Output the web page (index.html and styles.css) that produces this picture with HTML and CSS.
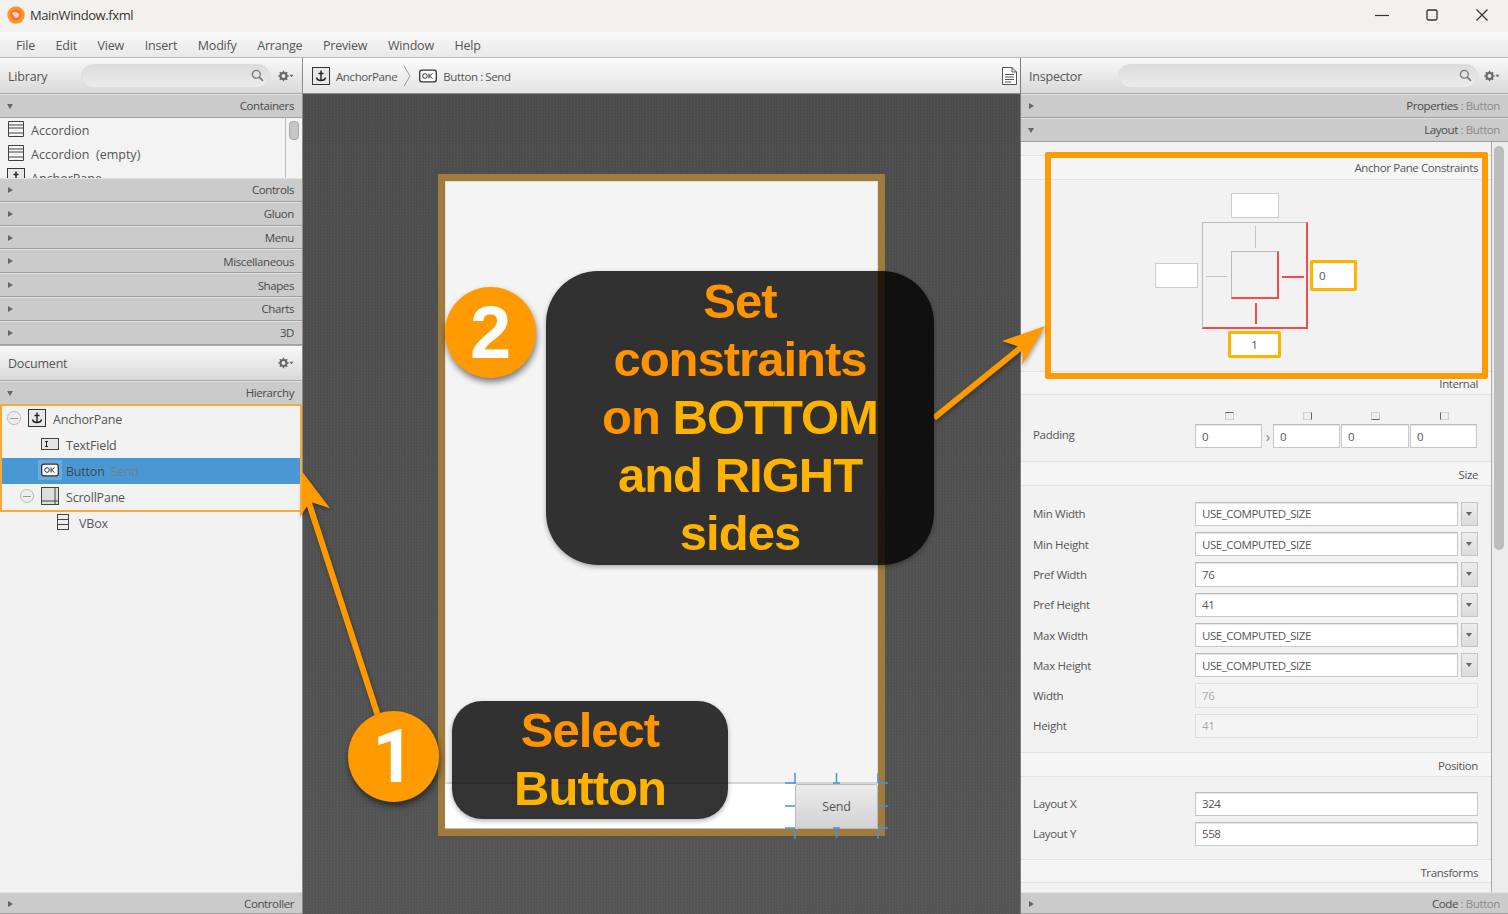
FILE: index.html
```html
<!DOCTYPE html>
<html lang="en">

<head>
    <meta charset="UTF-8">
    <title>MainWindow.fxml</title>
    <link rel="stylesheet" href="styles.css">
</head>

<body>
    <svg class="sprite" xmlns="http://www.w3.org/2000/svg">
        <symbol id="i-accordion" viewBox="0 0 18 18"><path d="M1.5 1.5h15v15h-15zM1.5 5h15M1.5 8h15M1.5 13h15" fill="none" stroke="#444" /></symbol>
        <symbol id="i-anchor" viewBox="0 0 18 18"><rect x=".5" y=".5" width="17" height="17" fill="#e8e8e8" stroke="#333" /><path d="M9 3.5v10M6.5 6.5h5M4.5 10.5c.5 2.5 2.5 3 4.5 3s4-.5 4.5-3" fill="none" stroke="#222" stroke-width="1.4" /></symbol>
        <symbol id="i-text" viewBox="0 0 18 14"><rect x=".5" y="1.5" width="17" height="11" fill="#e4e4e4" stroke="#444" /><path d="M4 4.5h3M4 9.5h3M5.5 4.5v5" fill="none" stroke="#222" /></symbol>
        <symbol id="i-ok" viewBox="0 0 18 14"><rect x=".7" y="1.2" width="16.6" height="11.6" rx="2" fill="#fff" stroke="#333" stroke-width="1.3" /><circle cx="6" cy="7" r="2.3" fill="none" stroke="#333" /><path d="M10 4.5v5M13.5 4.5l-3 2.5 3 2.5" fill="none" stroke="#333" /></symbol>
        <symbol id="i-scroll" viewBox="0 0 18 18"><rect x=".5" y=".5" width="17" height="17" fill="#ddd" stroke="#444" /><path d="M14 .5v17M.5 14h17" fill="none" stroke="#444" /></symbol>
        <symbol id="i-vbox" viewBox="0 0 12 16"><rect x=".5" y=".5" width="11" height="15" fill="#eee" stroke="#444" /><path d="M.5 5.5h11M.5 10.5h11" fill="none" stroke="#444" /></symbol>
        <symbol id="i-search" viewBox="0 0 14 14"><circle cx="5.7" cy="5.7" r="4.2" fill="none" stroke="#777" stroke-width="1.4" /><path d="M8.8 8.8l4 4" stroke="#777" stroke-width="1.8" /></symbol>
        <symbol id="i-gear" viewBox="0 0 16 12"><circle cx="5.5" cy="6" r="3" fill="none" stroke="#666" stroke-width="2" /><path d="M5.5 .8v2M5.5 9.2v2M.3 6h2M8.7 6h2M1.8 2.3l1.4 1.4M7.8 8.3l1.4 1.4M1.8 9.7l1.4-1.4M7.8 3.7l1.4-1.4" stroke="#666" stroke-width="1.4" /><path d="M11.5 4.8h4l-2 2.4z" fill="#666" /></symbol>
    </svg>

    <div class="titlebar">
        <svg class="app-logo" width="18" height="18" viewBox="0 0 17 17">
            <circle cx="8.5" cy="8.5" r="8.2" fill="#f99a1c" />
            <circle cx="8.5" cy="8.5" r="5.4" fill="#f6703a" />
            <path d="M4.500 6.500c2-1.500 4.500-1 6 0 1 .7 1.500 2 .5 3.500-1 1.300-3 1.500-4 .5-.5-1.500-1.800-2.500-2.500-4z" fill="#fbd0b8" />
        </svg>
        <span class="app-title">MainWindow.fxml</span>
        <div class="win-controls">
            <svg width="14" height="14" viewBox="0 0 14 14"><path d="M0 7.500h14" stroke="#333" stroke-width="1.2" /></svg>
            <svg width="14" height="14" viewBox="0 0 14 14"><rect x="2" y="2" width="10" height="10" rx="1.500" fill="none" stroke="#333" stroke-width="1.300" /></svg>
            <svg width="14" height="14" viewBox="0 0 14 14"><path d="M1.500 1.500l11 11M12.500 1.500l-11 11" stroke="#333" stroke-width="1.200" /></svg>
        </div>
    </div>

    <div class="menubar">
        <span>File</span><span>Edit</span><span>View</span><span>Insert</span><span>Modify</span><span>Arrange</span><span>Preview</span><span>Window</span><span>Help</span>
    </div>

    <div class="main">
        <div class="left">
            <div class="panel-head">
                <span class="panel-title">Library</span>
                <div class="search search-lib"><svg width="13" height="13"><use href="#i-search" /></svg></div>
                <svg class="gear" width="16" height="12"><use href="#i-gear" /></svg>
            </div>
            <div class="bar"><span class="tri down"></span>Containers</div>
            <div class="lib-list">
                <div class="lib-items">
                    <div class="lib-row"><svg width="18" height="18"><use href="#i-accordion" /></svg>Accordion</div>
                    <div class="lib-row"><svg width="18" height="18"><use href="#i-accordion" /></svg>Accordion&nbsp;&nbsp;(empty)</div>
                    <div class="lib-row"><svg width="18" height="18"><use href="#i-anchor" /></svg>AnchorPane</div>
                </div>
                <div class="lib-scroll"><div class="thumb"></div></div>
            </div>
            <div class="bar"><span class="tri"></span>Controls</div>
            <div class="bar"><span class="tri"></span>Gluon</div>
            <div class="bar"><span class="tri"></span>Menu</div>
            <div class="bar"><span class="tri"></span>Miscellaneous</div>
            <div class="bar"><span class="tri"></span>Shapes</div>
            <div class="bar"><span class="tri"></span>Charts</div>
            <div class="bar"><span class="tri"></span>3D</div>
            <div class="panel-head doc-head">
                <span class="panel-title">Document</span>
                <svg class="gear" width="16" height="12"><use href="#i-gear" /></svg>
            </div>
            <div class="bar"><span class="tri down"></span>Hierarchy</div>
            <div class="tree">
                <div class="tree-marked">
                    <div class="tree-row">
                        <span class="minus"></span>
                        <svg class="ic-root" width="18" height="18"><use href="#i-anchor" /></svg>AnchorPane
                    </div>
                    <div class="tree-row lvl1">
                        <svg width="18" height="14"><use href="#i-text" /></svg>TextField
                    </div>
                    <div class="tree-row lvl1 selected">
                        <svg width="18" height="14"><use href="#i-ok" /></svg>Button <em>Send</em>
                    </div>
                    <div class="tree-row lvl1b">
                        <span class="minus"></span>
                        <svg width="18" height="18"><use href="#i-scroll" /></svg>ScrollPane
                    </div>
                </div>
                <div class="tree-row lvl2">
                    <svg width="12" height="16"><use href="#i-vbox" /></svg>VBox
                </div>
            </div>
            <div class="bar foot"><span class="tri"></span>Controller</div>
        </div>

        <div class="center">
            <div class="crumbs">
                <svg width="18" height="18"><use href="#i-anchor" /></svg>
                <span>AnchorPane</span>
                <svg class="chev" width="8" height="22" viewBox="0 0 8 22"><path d="M1 1l6 10-6 10" fill="none" stroke="#999" /></svg>
                <svg width="18" height="14"><use href="#i-ok" /></svg>
                <span>Button : Send</span>
                <svg class="doc-ic" width="15" height="18" viewBox="0 0 15 18"><path d="M.5.500h9.500l4.500 4.500v12.500h-14zM10 .5v4.500h4.500M3 7.500h9M3 10h9M3 12.500h9M3 15h6" fill="#fff" stroke="#555" /></svg>
            </div>
            <div class="canvas">
                <div class="scene">
                    <div class="scene-body"></div>
                    <div class="scene-bottom">
                        <div class="scene-field"></div>
                        <div class="scene-btn">Send</div>
                    </div>
                </div>
            </div>
        </div>

        <div class="right">
            <div class="panel-head">
                <span class="panel-title">Inspector</span>
                <div class="search search-insp"><svg width="13" height="13"><use href="#i-search" /></svg></div>
                <svg class="gear" width="16" height="12"><use href="#i-gear" /></svg>
            </div>
            <div class="bar"><span class="tri"></span>Properties<i>&nbsp;: Button</i></div>
            <div class="bar"><span class="tri down"></span>Layout<i>&nbsp;: Button</i></div>
            <div class="insp">
                <div class="insp-body">
                    <div class="insp-gap"></div>
                    <div class="sec-head sec-anchor">Anchor Pane Constraints</div>
                    <div class="anchor-box">
                        <div class="a-input a-top"></div>
                        <div class="a-input a-left"></div>
                        <div class="a-input a-right">0</div>
                        <div class="a-input a-bottom">1</div>
                        <div class="a-outer"></div>
                        <div class="a-inner"></div>
                        <div class="tick tick-t"></div>
                        <div class="tick tick-l"></div>
                        <div class="tick tick-r"></div>
                        <div class="tick tick-b"></div>
                    </div>
                    <div class="sec-head">Internal</div>
                    <div class="pad-sec">
                        <span class="lbl">Padding</span>
                        <div class="pad-grid">
                            <span class="side s-top"></span><span></span><span class="side s-right"></span><span class="side s-bottom"></span><span class="side s-left"></span>
                            <div class="field">0</div><span class="pad-chev">›</span><div class="field">0</div><div class="field">0</div><div class="field">0</div>
                        </div>
                    </div>
                    <div class="sec-head">Size</div>
                    <div class="form form-size">
                        <span class="lbl">Min Width</span><div class="combo"><div class="field">USE_COMPUTED_SIZE</div><div class="combo-btn"></div></div>
                        <span class="lbl">Min Height</span><div class="combo"><div class="field">USE_COMPUTED_SIZE</div><div class="combo-btn"></div></div>
                        <span class="lbl">Pref Width</span><div class="combo"><div class="field">76</div><div class="combo-btn"></div></div>
                        <span class="lbl">Pref Height</span><div class="combo"><div class="field">41</div><div class="combo-btn"></div></div>
                        <span class="lbl">Max Width</span><div class="combo"><div class="field">USE_COMPUTED_SIZE</div><div class="combo-btn"></div></div>
                        <span class="lbl">Max Height</span><div class="combo"><div class="field">USE_COMPUTED_SIZE</div><div class="combo-btn"></div></div>
                        <span class="lbl">Width</span><div class="field off">76</div>
                        <span class="lbl">Height</span><div class="field off">41</div>
                    </div>
                    <div class="sec-head">Position</div>
                    <div class="form form-pos">
                        <span class="lbl">Layout X</span><div class="field">324</div>
                        <span class="lbl">Layout Y</span><div class="field">558</div>
                    </div>
                    <div class="sec-head">Transforms</div>
                </div>
                <div class="insp-scroll"><div class="thumb"></div></div>
            </div>
            <div class="bar foot"><span class="tri"></span>Code<i>&nbsp;: Button</i></div>
        </div>
    </div>

    <!-- tutorial marks on top of the app -->
    <div class="mark-box"></div>
    <svg class="overlay" width="1508" height="914" viewBox="0 0 1508 914">
        <path class="handles" d="M795 773v11M785 783h10M836.500 773v10M833 783h7M878 773v10M878 783h10M785 806h10M878 806h10M785 828h10M795 828v11M833 828h7M836.500 828v10M878 828v11M878 828h10" />
        <g class="arrows">
            <path d="M378 716L307 497" stroke="#ff9a00" stroke-width="6" />
            <path d="M302.300 471.700L330 508.300 310 501.700 300 516.700z" />
            <path d="M934 418l90-73" stroke="#ff9a00" stroke-width="6" />
            <path d="M1045 326l-43 15 21 7-1 17z" />
        </g>
    </svg>
    <div class="step step-2">2</div>
    <div class="step step-1">1</div>
    <div class="callout call-2">
        <span>Set</span><br><span>constraints</span><br><span>on</span> <b>BOTTOM</b><br><b>and RIGHT</b><br><b>sides</b>
    </div>
    <div class="callout call-1">
        <span>Select</span><br><b>Button</b>
    </div>
</body>

</html>
```

FILE: styles.css
```css
* {
    box-sizing: border-box;
}
html,
body {
    width: 1508px;
    height: 914px;
    margin: 0;
    padding: 0;
    overflow: hidden;
    position: relative;
    font-family: "Open Sans", "Noto Sans", sans-serif;
    font-size: 12px;
    letter-spacing: -0.2px;
    color: #555;
    background: #f2f2f2;
}
.sprite {
    display: none;
}

/* window chrome */
.titlebar {
    height: 32px;
    display: flex;
    align-items: center;
    padding-left: 7px;
    padding-bottom: 2px;
    background: #f3f1f0;
}
.app-logo {
    margin-right: 5px;
}
.app-title {
    font-size: 13px;
    letter-spacing: -0.4px;
    color: #333;
}
.win-controls {
    margin-left: auto;
    display: flex;
    gap: 36px;
    padding-right: 19px;
}
.menubar {
    height: 26px;
    display: flex;
    align-items: center;
    gap: 20.600px;
    padding: 2px 0 0 16px;
    background: linear-gradient(#f8f8f8, #e9e9e9);
    border-bottom: 1px solid #b8b8b8;
    font-size: 12.500px;
}
.main {
    display: flex;
    height: 856px;
}

/* panels */
.left {
    width: 303px;
    display: flex;
    flex-direction: column;
    border-right: 1px solid #8c8c8c;
}
.center {
    width: 717px;
    display: flex;
    flex-direction: column;
}
.right {
    width: 488px;
    display: flex;
    flex-direction: column;
    border-left: 1px solid #7c7c7c;
}
.panel-head {
    height: 36px;
    flex: none;
    display: flex;
    align-items: center;
    padding: 0 8px;
    background: linear-gradient(#f9f9f9, #d9d9d9);
    border-bottom: 1px solid #a8a8a8;
}
.panel-title {
    font-size: 12.500px;
    color: #555;
    padding-top: 2px;
}
.doc-head {
    justify-content: space-between;
    border-top: 1px solid #aaa;
}
.gear {
    flex: none;
}
.search {
    height: 24px;
    border: 1px solid #ddd;
    border-radius: 12px;
    background: linear-gradient(#dcdcdc, #ececec);
    display: flex;
    align-items: center;
    justify-content: flex-end;
    padding-right: 5px;
}
.search-lib {
    width: 189px;
    margin: 0 8px 0 auto;
}
.search-insp {
    width: 360px;
    margin: 0 6px 0 auto;
}
.bar {
    height: 23.850px;
    flex: none;
    display: flex;
    align-items: center;
    justify-content: flex-end;
    position: relative;
    padding: 0 8px 0 0;
    background: #cbcbcb;
    border-top: 1px solid #e2e2e2;
    border-bottom: 1px solid #a0a0a0;
    font-size: 11.500px;
    letter-spacing: -0.4px;
    color: #4a4a4a;
}
.bar i {
    font-style: normal;
    color: #8a8a8a;
}
.tri {
    position: absolute;
    left: 8px;
    top: 8px;
    border-left: 5px solid #666;
    border-top: 3px solid transparent;
    border-bottom: 3px solid transparent;
}
.tri.down {
    left: 7px;
    top: 9px;
    border-top: 5px solid #666;
    border-bottom: 0;
    border-left: 3px solid transparent;
    border-right: 3px solid transparent;
}
.foot {
    margin-top: auto;
    height: 22px;
}

/* library */
.lib-list {
    height: 60px;
    flex: none;
    display: flex;
    overflow: hidden;
    background: #f3f3f3;
}
.lib-items {
    flex: 1;
    border-right: 1px solid #bbb;
}
.lib-row {
    height: 24px;
    display: flex;
    align-items: center;
    gap: 6px;
    padding: 2px 0 0 7px;
    font-size: 12.500px;
    letter-spacing: 0;
}
.lib-row svg {
    margin-top: -3px;
}
.lib-scroll {
    width: 16px;
    flex: none;
    padding: 3px 3px 0 3px;
}
.lib-scroll .thumb {
    height: 19px;
    border-radius: 4px;
    background: #c6c6c6;
    border: 1px solid #aaa;
}

/* hierarchy */
.tree {
    background: #f2f2f2;
    padding-top: 1px;
}
.tree-marked {
    box-shadow: inset 2px 0 #f9a83a, inset -2px 0 #f9a83a, 0 -2px #f9a83a, 0 2px #f9a83a;
    position: relative;
    z-index: 1;
}
.tree-row {
    height: 26px;
    display: flex;
    align-items: center;
    padding-top: 1px;
    font-size: 12.500px;
}
.tree-row svg {
    margin: -2px 7px 0 0;
    flex: none;
}
.tree-row em {
    font-style: normal;
    color: #708090;
    margin-left: 6px;
}
.tree-row .ic-root {
    margin-left: 7px;
}
.minus {
    width: 14px;
    height: 14px;
    margin: -2px 0 0 7px;
    border-radius: 50%;
    border: 1px solid #bbb;
    background: linear-gradient(#9a9a9a, #9a9a9a) center / 8px 1px no-repeat, #eee;
    flex: none;
}
.lvl1 {
    padding-left: 41px;
}
.lvl1.selected {
    background: #4a98d3;
    margin: 0 2px;
    padding-left: 39px;
    color: #3d4a55;
}
.selected svg {
    background: #6aaade;
    outline: 3px solid #6aaade;
}
.lvl1b {
    padding-left: 20px;
}
.lvl1b .minus {
    margin: -2px 7px 0 0;
}
.lvl2 {
    padding-left: 57px;
}
.lvl2 svg {
    margin-right: 10px;
}

/* center: breadcrumb and canvas */
.crumbs {
    height: 36px;
    flex: none;
    display: flex;
    align-items: center;
    gap: 6px;
    padding: 0 3px 0 9px;
    background: linear-gradient(#fbfbfb, #e4e4e4);
    border-bottom: 1px solid #8c8c8c;
    font-size: 11.500px;
    letter-spacing: -0.400px;
}
.crumbs span {
    padding-top: 1px;
}
.chev {
    margin: 0 2px 0 0;
}
.doc-ic {
    margin-left: auto;
}
.canvas {
    flex: 1;
    display: flex;
    align-items: center;
    justify-content: center;
    padding-top: 2px;
    background-color: #4f4f4f;
    background-image:
        linear-gradient(rgba(0, 0, 0, 0.04), rgba(255, 255, 255, 0.03)),
        repeating-conic-gradient(#535353 0% 25%, #4d4d4d 0% 50%);
    background-size: 100% 100%, 3px 3px;
}
.scene {
    width: 447px;
    height: 662px;
    display: flex;
    flex-direction: column;
    background: #f4f4f4;
    border: 7px solid #9f7c3c;
}
.scene-body {
    flex: 1;
    border: 1px solid #ddd;
    border-bottom: 0;
}
.scene-bottom {
    height: 47px;
    display: flex;
    border-top: 2px solid #d6d6d6;
}
.scene-field {
    flex: 1;
    background: #fff;
    border-bottom: 1px solid #bbb;
}
.scene-btn {
    width: 83px;
    display: flex;
    align-items: center;
    justify-content: center;
    background: linear-gradient(#ececec, #d2d2d2);
    border: 1px solid #b8b8b8;
    border-radius: 3px;
    color: #555;
    font-size: 12.500px;
}

/* inspector */
.insp {
    flex: 1;
    display: flex;
    min-height: 0;
}
.insp-body {
    width: 471px;
    flex: none;
    border-right: 1px solid #a8a8a8;
    background: #f2f2f2;
    overflow: hidden;
}
.insp-gap {
    height: 13px;
}
.insp-scroll {
    flex: 1;
    padding: 4px 2px 0 2px;
    background: #ececec;
}
.insp-scroll .thumb {
    width: 10px;
    height: 404px;
    border-radius: 5px;
    background: #bdbdbd;
}
.sec-head {
    height: 24.500px;
    display: flex;
    align-items: center;
    justify-content: flex-end;
    padding: 2px 13px 0 0;
    background: #f5f5f5;
    border-top: 1px solid #e3e3e3;
    border-bottom: 1px solid #e3e3e3;
    font-size: 11.500px;
    letter-spacing: -0.400px;
    color: #555;
}
.sec-anchor {
    height: 25px;
    padding-top: 0;
}
.anchor-box {
    height: 191px;
    position: relative;
}
.a-input {
    position: absolute;
    background: #fff;
    border: 1px solid #ccc;
    display: flex;
    align-items: center;
    font-size: 11.500px;
}
.a-top {
    left: 210px;
    top: 13px;
    width: 48px;
    height: 25px;
}
.a-left {
    left: 134px;
    top: 83px;
    width: 43px;
    height: 25px;
}
.a-right {
    left: 289px;
    top: 80px;
    width: 47px;
    height: 31px;
    padding-left: 6px;
    border: 3px solid #ffb300;
    border-radius: 2px;
}
.a-bottom {
    left: 207px;
    top: 151px;
    width: 53px;
    height: 27px;
    justify-content: center;
    border: 3px solid #ffb300;
    border-radius: 2px;
}
.a-outer {
    position: absolute;
    left: 181px;
    top: 42px;
    width: 106px;
    height: 107px;
    border: 1px solid #bbb;
    border-right: 2px solid #f4494d;
    border-bottom: 2px solid #f4494d;
}
.a-inner {
    position: absolute;
    left: 210px;
    top: 71px;
    width: 48px;
    height: 48px;
    border: 1px solid #bbb;
    border-right: 2px solid #f4494d;
    border-bottom: 2px solid #f4494d;
}
.tick {
    position: absolute;
    background: #c4c4c4;
}
.tick-t {
    left: 234px;
    top: 46px;
    width: 1px;
    height: 22px;
}
.tick-l {
    left: 185px;
    top: 96px;
    width: 21px;
    height: 1px;
}
.tick-r {
    left: 261px;
    top: 96px;
    width: 22px;
    height: 2px;
    background: #f4494d;
}
.tick-b {
    left: 234px;
    top: 123px;
    width: 2px;
    height: 21px;
    background: #f4494d;
}
.lbl {
    font-size: 11.500px;
    letter-spacing: -0.300px;
    color: #555;
}
.field {
    height: 24.300px;
    display: flex;
    align-items: center;
    padding-left: 6px;
    background: #fff;
    border: 1px solid #c8c8c8;
    border-top-color: #bbb;
    box-shadow: inset 0 1px 1px #e6e6e6;
    font-size: 11.500px;
    letter-spacing: -0.450px;
    color: #555;
    min-width: 0;
}
.field.off {
    background: #f4f4f4;
    border-color: #e0e0e0;
    box-shadow: none;
    color: #aaa;
}
.pad-sec {
    height: 66px;
    display: flex;
    align-items: flex-end;
    padding: 0 0 13px 12px;
}
.pad-sec .lbl {
    width: 162px;
    align-self: flex-end;
    line-height: 26px;
}
.pad-grid {
    display: grid;
    grid-template-columns: 68px 10px 68px 69px 68px;
    row-gap: 4px;
    justify-items: center;
    align-items: center;
}
.pad-grid .field {
    width: calc(100% - 1px);
    justify-self: start;
}
.pad-chev {
    color: #888;
    font-size: 15px;
    line-height: 20px;
}
.side {
    width: 9px;
    height: 8px;
    border: 1px solid #d0d0d0;
    background: #eee;
}
.s-top {
    border-top-color: #666;
}
.s-right {
    border-right-color: #666;
}
.s-bottom {
    border-bottom-color: #666;
}
.s-left {
    border-left-color: #666;
}
.form {
    display: grid;
    grid-template-columns: 162px 283px;
    align-items: center;
    padding-left: 12px;
}
.form-size {
    row-gap: 6px;
    padding-top: 16px;
    padding-bottom: 14px;
}
.form-pos {
    row-gap: 5.700px;
    padding-top: 15px;
    padding-bottom: 13px;
}
.combo {
    display: flex;
    gap: 3px;
}
.combo .field {
    flex: 1;
}
.combo-btn {
    width: 17px;
    flex: none;
    border: 1px solid #c4c4c4;
    background: linear-gradient(#ececec, #dcdcdc);
    position: relative;
}
.combo-btn::after {
    content: "";
    position: absolute;
    left: 4px;
    top: 9px;
    border-top: 4px solid #666;
    border-left: 3.500px solid transparent;
    border-right: 3.500px solid transparent;
}

/* tutorial marks */
.mark-box {
    position: absolute;
    left: 1045px;
    top: 152px;
    width: 443px;
    height: 227px;
    border: 6px solid #ff9a00;
    border-radius: 2px;
}
.overlay {
    position: absolute;
    left: 0;
    top: 0;
}
.handles {
    fill: none;
    stroke: #4a90e2;
    stroke-width: 1.500;
}
.arrows {
    fill: #ff9a00;
    filter: drop-shadow(1px 2px 2px rgba(0, 0, 0, 0.35));
}
.step {
    position: absolute;
    width: 91px;
    height: 91px;
    display: flex;
    align-items: center;
    justify-content: center;
    border-radius: 50%;
    background: #ff9a00;
    box-shadow: 1px 4px 6px rgba(0, 0, 0, 0.5);
    font-family: "Liberation Sans", Arial, sans-serif;
    font-weight: 700;
    font-size: 74px;
    letter-spacing: 0;
    color: #fff;
}
.step-2 {
    left: 445px;
    top: 287px;
}
.step-1 {
    left: 348px;
    top: 711px;
    font-family: Roboto, "Liberation Sans", sans-serif;
}
.callout {
    position: absolute;
    background: rgba(0, 0, 0, 0.8);
    box-shadow: 0 2px 5px rgba(0, 0, 0, 0.3);
    text-align: center;
    font-family: "Liberation Sans", Arial, sans-serif;
    font-size: 49px;
    font-weight: 700;
    line-height: 58px;
    letter-spacing: -1px;
}
.callout span {
    color: #ff9400;
}
.callout b {
    color: #ffb300;
}
.call-2 {
    left: 546px;
    top: 271px;
    width: 388px;
    height: 294px;
    padding-top: 1px;
    border-radius: 52px;
}
.call-1 {
    left: 452px;
    top: 701px;
    width: 276px;
    height: 118px;
    border-radius: 30px;
}
```
